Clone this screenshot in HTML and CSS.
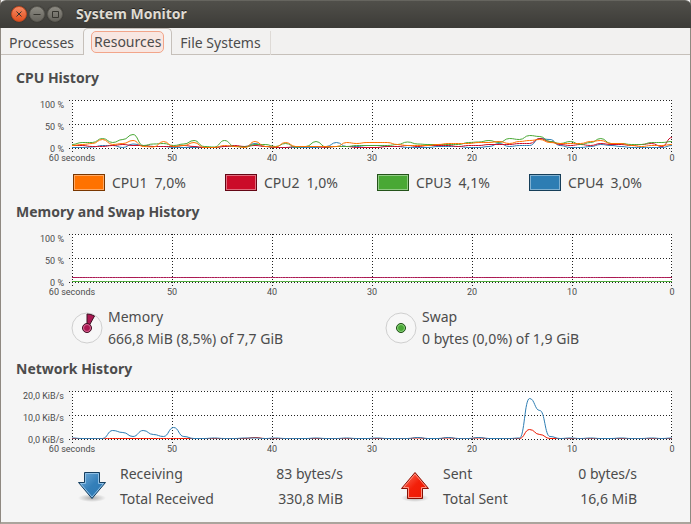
FILE: index.html
```html
<!DOCTYPE html>
<html lang="en">
<head>
    <meta charset="utf-8">
    <title>System Monitor</title>
    <link rel="stylesheet" href="styles.css">
</head>
<body>
    <div class="window">
        <header class="titlebar">
            <button class="win-button close" aria-label="Close">
                <svg width="10" height="10" viewBox="0 0 10 10"><path d="M2.5 2.5L7.5 7.5M7.5 2.5L2.5 7.5"/></svg>
            </button>
            <button class="win-button" aria-label="Minimize">
                <svg width="10" height="10" viewBox="0 0 10 10"><path d="M1.5 5.5H8.5"/></svg>
            </button>
            <button class="win-button" aria-label="Maximize">
                <svg width="10" height="10" viewBox="0 0 10 10"><path d="M2.5 2.5H8.5V8.5H2.5Z"/></svg>
            </button>
            <h1>System Monitor</h1>
        </header>

        <nav class="tabs" role="tablist">
            <button class="tab" role="tab">Processes</button>
            <button class="tab active" role="tab" aria-selected="true"><span>Resources</span></button>
            <button class="tab" role="tab">File Systems</button>
        </nav>

        <main class="content">
            <section>
                <h2>CPU History</h2>
                <div class="chart">
                    <div class="y-axis"><span>100 %</span><span>50 %</span><span>0 %</span></div>
                    <svg class="plot" id="cpu" viewBox="0 0 603 52" preserveAspectRatio="none"></svg>
                    <div class="x-axis"><span>60 seconds</span><span>50</span><span>40</span><span>30</span><span>20</span><span>10</span><span>0</span></div>
                </div>
                <div class="cpu-legend">
                    <div class="cpu"><button class="swatch orange" aria-label="CPU1 color"></button><span>CPU1</span><span>7,0%</span></div>
                    <div class="cpu"><button class="swatch red" aria-label="CPU2 color"></button><span>CPU2</span><span>1,0%</span></div>
                    <div class="cpu"><button class="swatch green" aria-label="CPU3 color"></button><span>CPU3</span><span>4,1%</span></div>
                    <div class="cpu"><button class="swatch blue" aria-label="CPU4 color"></button><span>CPU4</span><span>3,0%</span></div>
                </div>
            </section>

            <section>
                <h2>Memory and Swap History</h2>
                <div class="chart">
                    <div class="y-axis"><span>100 %</span><span>50 %</span><span>0 %</span></div>
                    <svg class="plot" id="memory" viewBox="0 0 603 52" preserveAspectRatio="none"></svg>
                    <div class="x-axis"><span>60 seconds</span><span>50</span><span>40</span><span>30</span><span>20</span><span>10</span><span>0</span></div>
                </div>
                <div class="mem-legend">
                    <div class="mem">
                        <svg width="32" height="32" viewBox="0 0 32 32">
                            <circle cx="16" cy="16" r="15" fill="#f7f7f7" stroke="#cfcfcf"/>
                            <path d="M16 16V2Q20 2 23.500 4L18 14Z" fill="#ab1852" stroke="#3d1022"/>
                            <circle cx="16" cy="16" r="4.500" fill="#ab1852" stroke="#3d1022"/>
                            <circle cx="16" cy="16" r="3.500" fill="none" stroke="#d66a95"/>
                        </svg>
                        <div><p>Memory</p><p>666,8 MiB (8,5%) of 7,7 GiB</p></div>
                    </div>
                    <div class="mem">
                        <svg width="32" height="32" viewBox="0 0 32 32">
                            <circle cx="16" cy="16" r="15" fill="#f7f7f7" stroke="#cfcfcf"/>
                            <circle cx="16" cy="16" r="4.500" fill="#49a835" stroke="#1c4a14"/>
                            <circle cx="16" cy="16" r="3.500" fill="none" stroke="#8ccf7e"/>
                        </svg>
                        <div><p>Swap</p><p>0 bytes (0,0%) of 1,9 GiB</p></div>
                    </div>
                </div>
            </section>

            <section>
                <h2>Network History</h2>
                <div class="chart">
                    <div class="y-axis"><span>20,0 KiB/s</span><span>10,0 KiB/s</span><span>0,0 KiB/s</span></div>
                    <svg class="plot" id="network" viewBox="0 0 603 52" preserveAspectRatio="none"></svg>
                    <div class="x-axis"><span>60 seconds</span><span>50</span><span>40</span><span>30</span><span>20</span><span>10</span><span>0</span></div>
                </div>
                <div class="net-legend">
                    <div class="net">
                        <svg width="30" height="32" viewBox="0 0 30 32">
                            <defs>
                                <linearGradient id="down" x1="0" y1="0" x2="1" y2="1"><stop offset="0" stop-color="#78b0dc"/><stop offset=".5" stop-color="#347fb9"/><stop offset="1" stop-color="#2b78b3"/></linearGradient>
                                <radialGradient id="shadow"><stop offset="0" stop-color="#000" stop-opacity=".3"/><stop offset="1" stop-color="#000" stop-opacity="0"/></radialGradient>
                            </defs>
                            <ellipse cx="15" cy="27" rx="14" ry="4" fill="url(#shadow)"/>
                            <path d="M7.500 1.500H22.500V11.500H28.500L15 27.500L1.500 11.500H7.500Z" fill="url(#down)" stroke="#163f60"/>
                            <path d="M8.500 2.500H21.500V12.500H26.500L15 26L3.500 12.500H8.500Z" fill="none" stroke="#8fbfe4"/>
                        </svg>
                        <dl>
                            <dt>Receiving</dt><dd>83 bytes/s</dd>
                            <dt>Total Received</dt><dd>330,8 MiB</dd>
                        </dl>
                    </div>
                    <div class="net">
                        <svg width="30" height="32" viewBox="0 0 30 32">
                            <defs>
                                <linearGradient id="up" x1="0" y1="0" x2="1" y2="1"><stop offset="0" stop-color="#ff7a66"/><stop offset=".5" stop-color="#f3200a"/><stop offset="1" stop-color="#ee1800"/></linearGradient>
                            </defs>
                            <ellipse cx="15" cy="27" rx="14" ry="4" fill="url(#shadow)"/>
                            <path d="M15 1.500L28.500 17.500H22.500V27.500H7.500V17.500H1.500Z" fill="url(#up)" stroke="#851105"/>
                            <path d="M15 3L26.500 16.500H21.500V26.500H8.500V16.500H3.500Z" fill="none" stroke="#ff9382"/>
                        </svg>
                        <dl>
                            <dt>Sent</dt><dd>0 bytes/s</dd>
                            <dt>Total Sent</dt><dd>16,6 MiB</dd>
                        </dl>
                    </div>
                </div>
            </section>
        </main>
    </div>

    <script src="script.js"></script>
</body>
</html>
```
FILE: styles.css
```css
* {
    box-sizing: border-box;
}

body {
    margin: 0;
    background-color: #3c3b37;
    color: #4c4c4c;
    font-family: "Noto Sans", "Open Sans", sans-serif;
    font-size: 14px;
    line-height: 22px;
}

h1, h2, p, dl, dd {
    margin: 0;
}

button {
    padding: 0;
    font: inherit;
    color: inherit;
}

.window {
    display: flex;
    flex-direction: column;
    min-height: 100vh;
    border: 1px solid #8f8981;
    border-top: none;
    border-bottom: 2px solid #aaa49c;
    background-color: #f5f5f5;
}

.titlebar {
    display: flex;
    align-items: center;
    gap: 2px;
    height: 28px;
    margin: 0 -1px;
    padding: 0 11px 1px;
    background: linear-gradient(#504f4a, #3c3b37);
    border-top: 1px solid #66655f;
    border-radius: 6px 6px 0 0;
}

.titlebar h1 {
    margin-left: 11px;
    font-size: 14px;
    color: #dfdbd2;
    text-shadow: 0 -1px #222;
}

.win-button {
    display: flex;
    align-items: center;
    justify-content: center;
    width: 16px;
    height: 16px;
    border: 1px solid #5b5952;
    border-radius: 50%;
    background: linear-gradient(#8c8a82, #66645d);
    box-shadow: 0 0 1px #22211e;
}

.win-button svg {
    flex-shrink: 0;
    fill: none;
    stroke: #36352f;
}

.win-button.close {
    border-color: #c04a22;
    background: linear-gradient(#f58a63, #e2501f);
}

.tabs {
    display: flex;
    align-items: flex-end;
    height: 27px;
    background-color: #f2f1f0;
    box-shadow: inset 0 -1px #c6c0ba;
}

.tab {
    height: 24px;
    padding: 0 9px 0 8px;
    border: none;
    border-right: 1px solid #dedad6;
    background: none;
}

.tab:first-child {
    border-right: none;
}

.tab.active {
    height: 27px;
    padding: 0 7px;
    border: 1px solid #c6c0ba;
    border-bottom: none;
    border-radius: 5px 5px 0 0;
    background-color: #f5f5f5;
}

.tab.active span {
    display: block;
    height: 22px;
    padding: 0 2px;
    border: 1px solid #f2a58a;
    border-radius: 5px;
    background-color: #f8e7e2;
    line-height: 19px;
}

.content {
    display: flex;
    flex-direction: column;
    gap: 9px;
    padding: 13px 18px 12px 15px;
}

h2 {
    margin-bottom: 12px;
    font-size: 14px;
    line-height: 20px;
}

.chart {
    display: grid;
    grid-template-columns: 48px 1fr;
    column-gap: 5px;
    margin-bottom: 8px;
    font-family: Roboto, sans-serif;
    font-size: 9px;
    line-height: 10px;
}

.y-axis {
    display: flex;
    flex-direction: column;
    justify-content: space-between;
    height: 54px;
    grid-row: span 2;
    text-align: right;
}

.plot {
    display: block;
    width: 100%;
    height: 52px;
}

.x-axis {
    display: flex;
    justify-content: space-between;
    height: 12px;
    padding-left: 3px;
    line-height: 12px;
}

/* zero width keeps every label centred on its grid line */
.x-axis span {
    display: flex;
    justify-content: center;
    width: 0;
    white-space: nowrap;
}

.plot .back {
    fill: #fff;
}

.plot .grid {
    fill: none;
    stroke: #222;
    stroke-dasharray: 1 2;
}

.plot .line {
    fill: none;
    stroke-width: 1;
}

.cpu-legend {
    display: grid;
    grid-template-columns: repeat(3, 1fr) 143px;
    padding-left: 57px;
}

.cpu {
    display: flex;
    align-items: center;
    gap: 7px;
    height: 21px;
}

.swatch {
    width: 32px;
    height: 17px;
    border: 1px solid;
    box-shadow: inset 0 0 0 1px rgba(255, 255, 255, 0.4);
}

.orange {
    background-color: #ff7200;
    border-color: #7a3700;
}

.red {
    background-color: #cb0c29;
    border-color: #640614;
}

.green {
    background-color: #49a835;
    border-color: #24531a;
}

.blue {
    background-color: #2d7db3;
    border-color: #163e59;
}

.mem-legend {
    display: grid;
    grid-template-columns: 1fr 287px;
    padding-left: 55px;
}

.mem {
    display: flex;
    align-items: center;
    gap: 5px;
}

.net-legend {
    display: grid;
    grid-template-columns: 1fr 237px;
    column-gap: 57px;
    padding: 0 35px 0 61px;
}

.net {
    display: flex;
    align-items: center;
    gap: 13px;
}

.net dl {
    display: grid;
    grid-template-columns: auto auto;
    row-gap: 3px;
    flex: 1;
}

.net dd {
    text-align: right;
}
```
FILE: script.js
```js
// samples are heights in px above the 0 line, oldest first
const charts = {
    cpu: [
        { color: '#2d7db3', data: [1, 1, 1.5, 3, 3, 1, 4.5, 3, 2, 2, 1, 1, 1, 1, 1, 2, 2, 2, 5, 2, 1, 1, 1, 1, 1, 2, 6, 2, 2, 3, 3, 2, 2, 1, 1, 1, 2, 2, 2, 1, 1, 2, 5, 2, 3, 3, 10, 9, 3, 1, 1, 2, 4, 3, 2, 1, 1, 1, 1, 3] },
        { color: '#cb0c29', data: [3, 3, 2, 2, 3, 4, 3, 3, 2, 2, 2, 3, 2, 1, 1, 2, 3, 2, 3, 2, 1, 1, 2, 2, 2, 1, 2, 2, 1, 1, 1, 2, 2, 3, 2, 3, 3, 3, 2, 3, 3, 4, 4, 4, 5, 5, 10, 7, 4, 3, 4, 3, 5, 4, 4, 3, 4, 5, 2, 11] },
        { color: '#49a835', data: [4, 6, 6, 10, 6, 9, 14, 3, 4.5, 5, 3, 4.5, 8, 2, 1.5, 8, 2, 1.5, 4, 4, 2, 5, 1.5, 2, 7, 1.5, 2, 2, 3, 3, 3, 3, 4, 6.5, 4.5, 4, 4, 4, 4, 6, 6.5, 8, 6, 10, 9, 13, 12, 7, 5, 7, 4, 6, 10, 5, 5, 4, 4, 6, 6, 7] },
        { color: '#ff7200', data: [3, 4, 5, 9, 4, 5, 8, 2, 1.5, 7, 2, 3, 6, 1, 1, 3, 2, 1, 7, 2, 1.5, 6, 2, 2, 2, 2, 2, 6, 5, 6, 6, 6, 4, 3, 3, 3, 4, 5, 5, 5, 6, 6, 7, 5, 7, 8, 9, 6, 5, 5, 5, 7, 8, 5, 5, 3, 2, 3, 3, 4] }
    ],
    memory: [
        { color: '#ab1852', data: Array(60).fill(5) },
        { color: '#49a835', data: Array(60).fill(1) }
    ],
    network: [
        { color: '#ee1800', data: [1, 1, 1, 1, 1, 1, 1, 1, 1, 1, 1, 1, 1, 1, 1, 1, 1, 1, 2, 1, 1, 1, 1, 1, 1, 1, 1, 1, 1, 1, 1, 1, 1, 1, 1.5, 1, 1, 1.5, 1, 1, 1.5, 1, 1, 1, 1, 10, 5, 1, 1, 1, 1, 1, 1, 1, 1, 1, 1, 1, 1, 1] },
        { color: '#2d7db3', data: [1.5, 1, 1, 1, 9, 7, 3, 9, 5, 3, 12, 3, 1, 1, 1.5, 1, 1, 1.5, 1.5, 1, 1.5, 1, 1, 1, 1.5, 1, 1, 1.5, 1, 1, 1.5, 1, 1, 1, 2, 1, 1, 2, 1, 1, 2, 1, 1, 1, 1.5, 41, 29, 3, 1, 1.5, 1, 1.5, 1, 1, 1.5, 1, 1, 1.5, 1, 1.5] }
    ]
};

const gridLines = 'M0 .5H603M0 24.5H603M0 48.5H603' +
    'M3.5 0V52M103.5 0V52M203.5 0V52M303.5 0V52M403.5 0V52M503.5 0V52M602.5 0V52';

function addShape(svg, tag, attrs) {
    const el = document.createElementNS('http://www.w3.org/2000/svg', tag);
    for (const name in attrs) {
        el.setAttribute(name, attrs[name]);
    }
    svg.appendChild(el);
}

function curve(data) {
    const step = 600 / (data.length - 1);
    let d = 'M3 ' + (48.5 - data[0]);
    for (let i = 1; i < data.length; i++) {
        const x = 3 + i * step;
        const mid = x - step / 2;
        d += 'C' + [mid, 48.5 - data[i - 1], mid, 48.5 - data[i], x, 48.5 - data[i]].join(' ');
    }
    return d;
}

for (const id in charts) {
    const svg = document.getElementById(id);
    addShape(svg, 'rect', { class: 'back', x: 3, y: 0, width: 600, height: 49 });
    addShape(svg, 'path', { class: 'grid', d: gridLines });
    charts[id].forEach(s => addShape(svg, 'path', { class: 'line', d: curve(s.data), stroke: s.color }));
}
```
